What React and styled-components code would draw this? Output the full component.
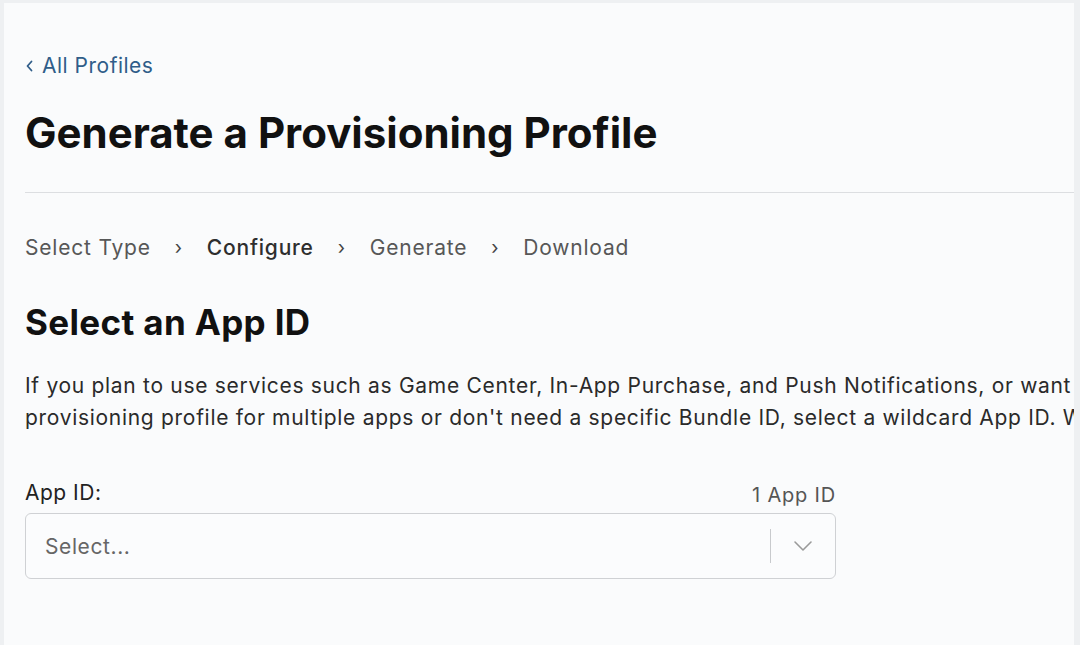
import React from "react";
import styled, { createGlobalStyle } from "styled-components";

const Global = createGlobalStyle`
  html, body { margin: 0; padding: 0; }
  body {
    background: #eef0f2;
    font-family: Inter, "Noto Sans", "Liberation Sans", sans-serif;
    -webkit-font-smoothing: antialiased;
  }
`;

const Frame = styled.div`
  width: 1080px;
  height: 645px;
  overflow: hidden;
  padding: 3px 6px 0 4px;
  box-sizing: border-box;
  display: flex;
`;

const Card = styled.main`
  flex: 1;
  min-width: 0;
  background: #fafbfc;
  padding: 50px 0 0 21px;
  overflow: hidden;
  display: flex;
  flex-direction: column;
`;

const BackLink = styled.a`
  font-size: 21px;
  letter-spacing: 0.5px;
  color: #2f5d89;
  text-decoration: none;
  display: flex;
  align-items: center;
  gap: 8px;
  line-height: 26px;
`;

const Title = styled.h1`
  margin: 30px 0 0;
  font-size: 42px;
  font-weight: 700;
  color: #111;
  line-height: 48px;
`;

const Divider = styled.hr`
  margin: 35px 0 0;
  border: 0;
  border-top: 1.5px solid #dcdee1;
  height: 0;
`;

const Steps = styled.nav`
  display: flex;
  align-items: center;
  margin-top: 42px;
  font-size: 21px;
  letter-spacing: 0.8px;
  line-height: 26px;
`;

const Step = styled.span`
  color: ${(p) => (p.$active ? "#2e2e2e" : "#575757")};
  font-weight: ${(p) => (p.$active ? 500 : 400)};
`;

const Sep = styled.span`
  width: 56px;
  text-align: center;
  color: #444;
  font-size: 19px;
`;

const SubTitle = styled.h2`
  margin: 41px 0 0;
  font-size: 35px;
  letter-spacing: 0.35px;
  font-weight: 700;
  color: #111;
  line-height: 40px;
`;

const Para = styled.p`
  margin: 28px 0 0;
  font-size: 21px;
  letter-spacing: 0.7px;
  line-height: 32px;
  color: #2a2a2a;
  white-space: nowrap;
`;

const Field = styled.div`
  width: 811px;
  margin-top: 46px;
`;

const FieldHead = styled.div`
  display: flex;
  justify-content: space-between;
  align-items: flex-end;
`;

const Label = styled.label`
  font-size: 21px;
  letter-spacing: 0.5px;
  color: #222;
  line-height: 26px;
`;

const Count = styled.span`
  font-size: 20px;
  letter-spacing: 0.8px;
  color: #555;
  line-height: 26px;
  position: relative;
  top: 2px;
`;

const SelectBox = styled.div`
  margin-top: 7px;
  height: 66px;
  border: 1.5px solid #cfd1d4;
  border-radius: 6px;
  background: #fbfcfd;
  display: flex;
  align-items: center;
  box-sizing: border-box;
`;

const Placeholder = styled.span`
  flex: 1;
  padding-left: 19px;
  font-size: 21px;
  letter-spacing: 0.6px;
  color: #666;
`;

const Indicator = styled.div`
  display: flex;
  align-items: center;
  height: 100%;
  padding-right: 22px;
`;

const VBar = styled.span`
  width: 1.5px;
  height: 34px;
  background: #c8cacd;
  margin-right: 22px;
`;

const Chevron = () => (
  <svg width="20" height="12" viewBox="0 0 20 12" fill="none">
    <path d="M2 2 L10 10 L18 2" stroke="#9a9a9a" strokeWidth="1.6" strokeLinecap="round" strokeLinejoin="round" />
  </svg>
);

const BackChevron = () => (
  <svg width="9" height="14" viewBox="0 0 9 14" fill="none">
    <path d="M6.5 2.5 L2.5 7 L6.5 11.5" stroke="#2f5d89" strokeWidth="1.8" strokeLinecap="round" strokeLinejoin="round" />
  </svg>
);

export default function App() {
  const steps = ["Select Type", "Configure", "Generate", "Download"];
  return (
    <>
      <Global />
      <Frame>
        <Card>
          <BackLink href="#">
            <BackChevron />
            All Profiles
          </BackLink>
          <Title>Generate a Provisioning Profile</Title>
          <Divider />
          <Steps>
            {steps.map((s, i) => (
              <React.Fragment key={s}>
                {i > 0 && <Sep>›</Sep>}
                <Step $active={s === "Configure"}>{s}</Step>
              </React.Fragment>
            ))}
          </Steps>
          <SubTitle>Select an App ID</SubTitle>
          <Para>
            If you plan to use services such as Game Center, In-App Purchase, and Push Notifications, or want a Bundle ID unique to a single app, use an explicit App ID. If you want to create one
            <br />
            provisioning profile for multiple apps or don't need a specific Bundle ID, select a wildcard App ID. Wildcard App IDs use an asterisk (*) as the last digit in the Bundle ID field.
          </Para>
          <Field>
            <FieldHead>
              <Label>App ID:</Label>
              <Count>1 App ID</Count>
            </FieldHead>
            <SelectBox>
              <Placeholder>Select...</Placeholder>
              <Indicator>
                <VBar />
                <Chevron />
              </Indicator>
            </SelectBox>
          </Field>
        </Card>
      </Frame>
    </>
  );
}
